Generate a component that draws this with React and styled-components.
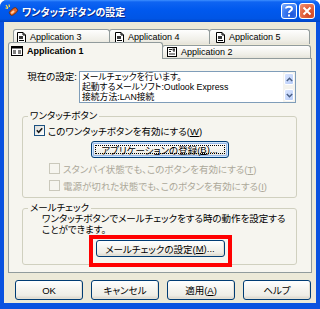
import React from "react";
import styled, { createGlobalStyle } from "styled-components";

const GlobalStyle = createGlobalStyle`
  html, body { margin: 0; padding: 0; background: #fff; }
  body {
    font-family: "Liberation Sans", "Noto Sans CJK JP", sans-serif;
    font-size: 9.5px;
    font-feature-settings: "palt";
    color: #000;
  }
  * { box-sizing: border-box; }
`;

const Window = styled.div`
  width: 320px;
  height: 309px;
  display: flex;
  flex-direction: column;
  background: #0a52e0;
  border-radius: 7px 7px 0 0;
  overflow: hidden;
`;

const TitleBar = styled.div`
  height: 22px;
  flex: none;
  display: flex;
  align-items: center;
  padding: 0 5px 0 5px;
  background: linear-gradient(#3d8fff 0%, #0f64f2 9%, #0059ee 45%, #0055e5 85%, #0043c4 100%);
`;

const TitleText = styled.span`
  flex: 1;
  margin-left: 3px;
  color: #fff;
  font-weight: bold;
  font-size: 10px;
  text-shadow: 1px 1px 0 #0b2a8a;
`;

const CaptionButton = styled.div`
  width: 16px;
  height: 16px;
  margin-left: 2px;
  border: 1px solid #fff;
  border-radius: 3px;
  display: flex;
  align-items: center;
  justify-content: center;
  background: ${(p) =>
    p.$close
      ? "radial-gradient(circle at 70% 75%, #cc4424 0%, #e2643f 50%, #f29478 100%)"
      : "radial-gradient(circle at 70% 75%, #1f55d8 0%, #3c7cf3 55%, #8db7ff 100%)"};
`;

const Client = styled.div`
  flex: 1;
  margin: 0 4px 6px 4px;
  background: #ece9d8;
  display: flex;
  flex-direction: column;
  padding-top: 7px;
`;

const BackRow = styled.div`
  display: flex;
  height: 15px;
  padding-left: 9px;
`;

const FrontRow = styled.div`
  display: flex;
  align-items: flex-end;
  height: 14px;
  padding-left: 4px;
`;

const Tab = styled.div`
  width: ${(p) => p.$w}px;
  height: ${(p) => (p.$active ? 17 : p.$h || 15)}px;
  margin-right: -1px;
  margin-bottom: ${(p) => (p.$active ? -1 : 0)}px;
  border: 1px solid #919b9c;
  border-bottom: none;
  border-radius: 3px 3px 0 0;
  background: ${(p) => (p.$active ? "#f6f5ef" : "linear-gradient(#fefefe, #f0efe8 70%, #e6e4da)")};
  display: flex;
  align-items: center;
  gap: 4px;
  padding-left: ${(p) => p.$pad}px;
  font-size: 9px;
  font-weight: ${(p) => (p.$active ? "bold" : "normal")};
  position: relative;
  z-index: ${(p) => (p.$active ? 2 : 1)};
`;

const Panel = styled.div`
  margin: 0 4px;
  height: 215px;
  border: 1px solid #919b9c;
  background: #f6f5ef;
  position: relative;
  z-index: 1;
`;

const Content = styled.div`
  margin-left: 13px;
  width: 275px;
  display: flex;
  flex-direction: column;
`;

const SettingRow = styled.div`
  margin-top: 12px;
  height: 32px;
  display: flex;
  gap: 2px;
`;

const SettingLabel = styled.div`
  width: 55px;
  text-align: right;
  padding-top: 1px;
  line-height: 10px;
`;

const TextBox = styled.div`
  width: 217px;
  height: 32px;
  border: 1px solid #7f9db9;
  background: #fff;
  display: flex;
`;

const TextLines = styled.div`
  flex: 1;
  padding: 0 0 0 2px;
  font-size: 8.8px;
  line-height: 10px;
  white-space: nowrap;
  overflow: hidden;
`;

const ScrollBar = styled.div`
  width: 12px;
  background: #f4f3ee;
  display: flex;
  flex-direction: column;
  justify-content: space-between;
  padding: 1px 1px;
`;

const ScrollButton = styled.div`
  height: 12px;
  border: 1px solid #fff;
  border-radius: 2px;
  background: linear-gradient(135deg, #dbe6ff, #b8cdf9);
  display: flex;
  align-items: center;
  justify-content: center;
`;

const Group = styled.fieldset`
  margin: ${(p) => p.$top}px 0 0 0;
  padding: 0 0 ${(p) => p.$bottom}px 0;
  border: 1px solid #d0d0bf;
  border-radius: 3px;
  min-width: 0;
  display: flex;
  flex-direction: column;
`;

const Legend = styled.legend`
  margin-left: 5px;
  padding: 0 2px;
  line-height: 10px;
`;

const CheckRow = styled.div`
  display: flex;
  align-items: center;
  gap: 3px;
  height: 11px;
  margin-top: ${(p) => p.$top}px;
  padding-left: ${(p) => p.$indent}px;
  color: ${(p) => (p.$disabled ? "#aca899" : "#000")};
  white-space: nowrap;
`;

const Box = styled.span`
  width: 11px;
  height: 11px;
  flex: none;
  border: 1px solid ${(p) => (p.$disabled ? "#cac8bb" : "#1c5180")};
  background: ${(p) => (p.$disabled ? "#f6f5ef" : "linear-gradient(135deg, #dcdcd7, #fff)")};
  display: flex;
  align-items: center;
  justify-content: center;
`;

const Key = styled.span`
  text-decoration: underline;
`;

const Button = styled.button`
  width: ${(p) => p.$w}px;
  height: ${(p) => p.$h}px;
  padding: 0;
  font: inherit;
  color: #000;
  border: 1px solid #003c74;
  border-radius: 3px;
  background: linear-gradient(#ffffff 0%, #f5f4ef 45%, #eeede6 80%, #d8d2c6 100%);
  box-shadow: ${(p) =>
    p.$focus ? "inset 0 0 0 1px #cee7ff, inset 0 0 0 2px #98b8ea" : "inset -1px -1px 0 #e3e0d5"};
  display: flex;
  align-items: center;
  justify-content: center;
  white-space: nowrap;
`;

const FocusRing = styled.span`
  display: flex;
  align-items: center;
  justify-content: center;
  width: calc(100% - 6px);
  height: calc(100% - 6px);
  border: 1px dotted #000;
`;

const CenterButton = styled.div`
  display: flex;
  justify-content: center;
  margin-top: ${(p) => p.$top}px;
`;

const Note = styled.div`
  padding-left: 19px;
  line-height: 11px;
  white-space: nowrap;
`;

const RedFrame = styled.div`
  align-self: center;
  margin: 0 0 -3px 1px;
  border: 4px solid #ff0000;
  padding: 1px 3px 6px 3px;
  position: relative;
`;

const ButtonRow = styled.div`
  display: flex;
  gap: 8px;
  padding-left: 11px;
  margin-top: 7px;
`;

const TitleIcon = () => (
  <svg width="14" height="14" viewBox="0 0 14 14">
    <path d="M1 1 L3 4 M4 0.5 L4.5 3 M0.5 4 L3 4.5" stroke="#ffe04a" strokeWidth="1.2" />
    <rect x="4" y="5" width="9" height="5" rx="2.5" transform="rotate(-40 8.5 7.5)" fill="#e8662a" stroke="#5a2a10" strokeWidth="0.8" />
    <rect x="5.5" y="6.5" width="4" height="2" rx="1" transform="rotate(-40 8.5 7.5)" fill="#ffd0a0" />
  </svg>
);

const DocIcon = () => (
  <svg width="9" height="11" viewBox="0 0 9 11">
    <path d="M0.5 0.5 H6 L8.5 3 V10.5 H0.5 Z" fill="#fff" stroke="#000" />
    <path d="M6 0.5 V3 H8.5" fill="none" stroke="#000" />
    <rect x="2" y="4" width="4" height="3" fill="#3a3a3a" />
    <path d="M2 8.5 H7" stroke="#000" />
  </svg>
);

const WindowIcon = () => (
  <svg width="12" height="10" viewBox="0 0 12 10">
    <rect x="0.5" y="0.5" width="11" height="9" fill="#fff" stroke="#000" />
    <rect x="0.5" y="0.5" width="11" height="2" fill="#000" />
    <path d="M2 5 H5 M2 7 H5 M7 5 H10 M7 7 H10" stroke="#000" />
  </svg>
);

const DialogIcon = () => (
  <svg width="10" height="10" viewBox="0 0 10 10">
    <rect x="0.5" y="0.5" width="9" height="9" fill="#fff" stroke="#000" />
    <path d="M2 2.5 H5 M2 4.5 H4 M6 4 H8 M2 7 H8" stroke="#222" />
    <rect x="5.5" y="1.5" width="2.5" height="2" fill="#333" />
  </svg>
);

const Chevron = ({ up }) => (
  <svg width="7" height="5" viewBox="0 0 7 5">
    <path d={up ? "M0.8 4 L3.5 1.3 L6.2 4" : "M0.8 1 L3.5 3.7 L6.2 1"} fill="none" stroke="#4d6185" strokeWidth="1.5" />
  </svg>
);

const Check = () => (
  <svg width="7" height="7" viewBox="0 0 7 7">
    <path d="M0.8 3.2 L2.7 5.3 L6.2 1.2" fill="none" stroke="#1a1a1a" strokeWidth="1.6" />
  </svg>
);

const CheckItem = ({ checked, disabled, top, indent, children }) => (
  <CheckRow $top={top} $indent={indent} $disabled={disabled}>
    <Box $disabled={disabled}>{checked && <Check />}</Box>
    <span>{children}</span>
  </CheckRow>
);

export default function App() {
  return (
    <>
      <GlobalStyle />
      <Window>
        <TitleBar>
          <TitleIcon />
          <TitleText>ワンタッチボタンの設定</TitleText>
          <CaptionButton>
            <svg width="10" height="12" viewBox="0 0 10 12">
              <path d="M2 3.5 C2 1 8 1 8 3.8 C8 5.8 5 5.6 5 8" fill="none" stroke="#fff" strokeWidth="2" />
              <rect x="4" y="9.5" width="2" height="2" fill="#fff" />
            </svg>
          </CaptionButton>
          <CaptionButton $close>
            <svg width="10" height="10" viewBox="0 0 10 10">
              <path d="M1.5 1.5 L8.5 8.5 M8.5 1.5 L1.5 8.5" stroke="#fff" strokeWidth="2" />
            </svg>
          </CaptionButton>
        </TitleBar>
        <Client>
          <BackRow>
            <Tab $w={97} $pad={3}>
              <DocIcon />
              Application 3
            </Tab>
            <Tab $w={101} $pad={5}>
              <DocIcon />
              Application 4
            </Tab>
            <Tab $w={101} $pad={6}>
              <DocIcon />
              Application 5
            </Tab>
          </BackRow>
          <FrontRow>
            <Tab $w={155} $pad={2} $active>
              <WindowIcon />
              Application 1
            </Tab>
            <Tab $w={149} $h={13} $pad={4}>
              <DialogIcon />
              Application 2
            </Tab>
          </FrontRow>
          <Panel>
            <Content>
              <SettingRow>
                <SettingLabel>現在の設定:</SettingLabel>
                <TextBox>
                  <TextLines>
                    メールチェックを行います。
                    <br />
                    起動するメールソフト:Outlook Express
                    <br />
                    接続方法:LAN接続
                  </TextLines>
                  <ScrollBar>
                    <ScrollButton>
                      <Chevron up />
                    </ScrollButton>
                    <ScrollButton>
                      <Chevron />
                    </ScrollButton>
                  </ScrollBar>
                </TextBox>
              </SettingRow>

              <Group $top={8} $bottom={6}>
                <Legend>ワンタッチボタン</Legend>
                <CheckItem checked top={4} indent={11}>
                  このワンタッチボタンを有効にする(<Key>W</Key>)
                </CheckItem>
                <CenterButton $top={5}>
                  <Button $w={138} $h={17} $focus>
                    <FocusRing>
                      アプリケーションの登録(<Key>B</Key>)...
                    </FocusRing>
                  </Button>
                </CenterButton>
                <CheckItem disabled top={5} indent={26}>
                  スタンバイ状態でも、このボタンを有効にする(<Key>T</Key>)
                </CheckItem>
                <CheckItem disabled top={6} indent={26}>
                  電源が切れた状態でも、このボタンを有効にする(<Key>I</Key>)
                </CheckItem>
              </Group>

              <Group $top={5} $bottom={0}>
                <Legend>メールチェック</Legend>
                <Note>
                  ワンタッチボタンでメールチェックをする時の動作を設定する
                  <br />
                  ことができます。
                </Note>
                <RedFrame>
                  <Button $w={129} $h={17}>
                    メールチェックの設定(<Key>M</Key>)...
                  </Button>
                </RedFrame>
              </Group>
            </Content>
          </Panel>
          <ButtonRow>
            <Button $w={68} $h={20}>OK</Button>
            <Button $w={68} $h={20}>キャンセル</Button>
            <Button $w={68} $h={20}>
              適用(<Key>A</Key>)
            </Button>
            <Button $w={68} $h={20}>ヘルプ</Button>
          </ButtonRow>
        </Client>
      </Window>
    </>
  );
}
